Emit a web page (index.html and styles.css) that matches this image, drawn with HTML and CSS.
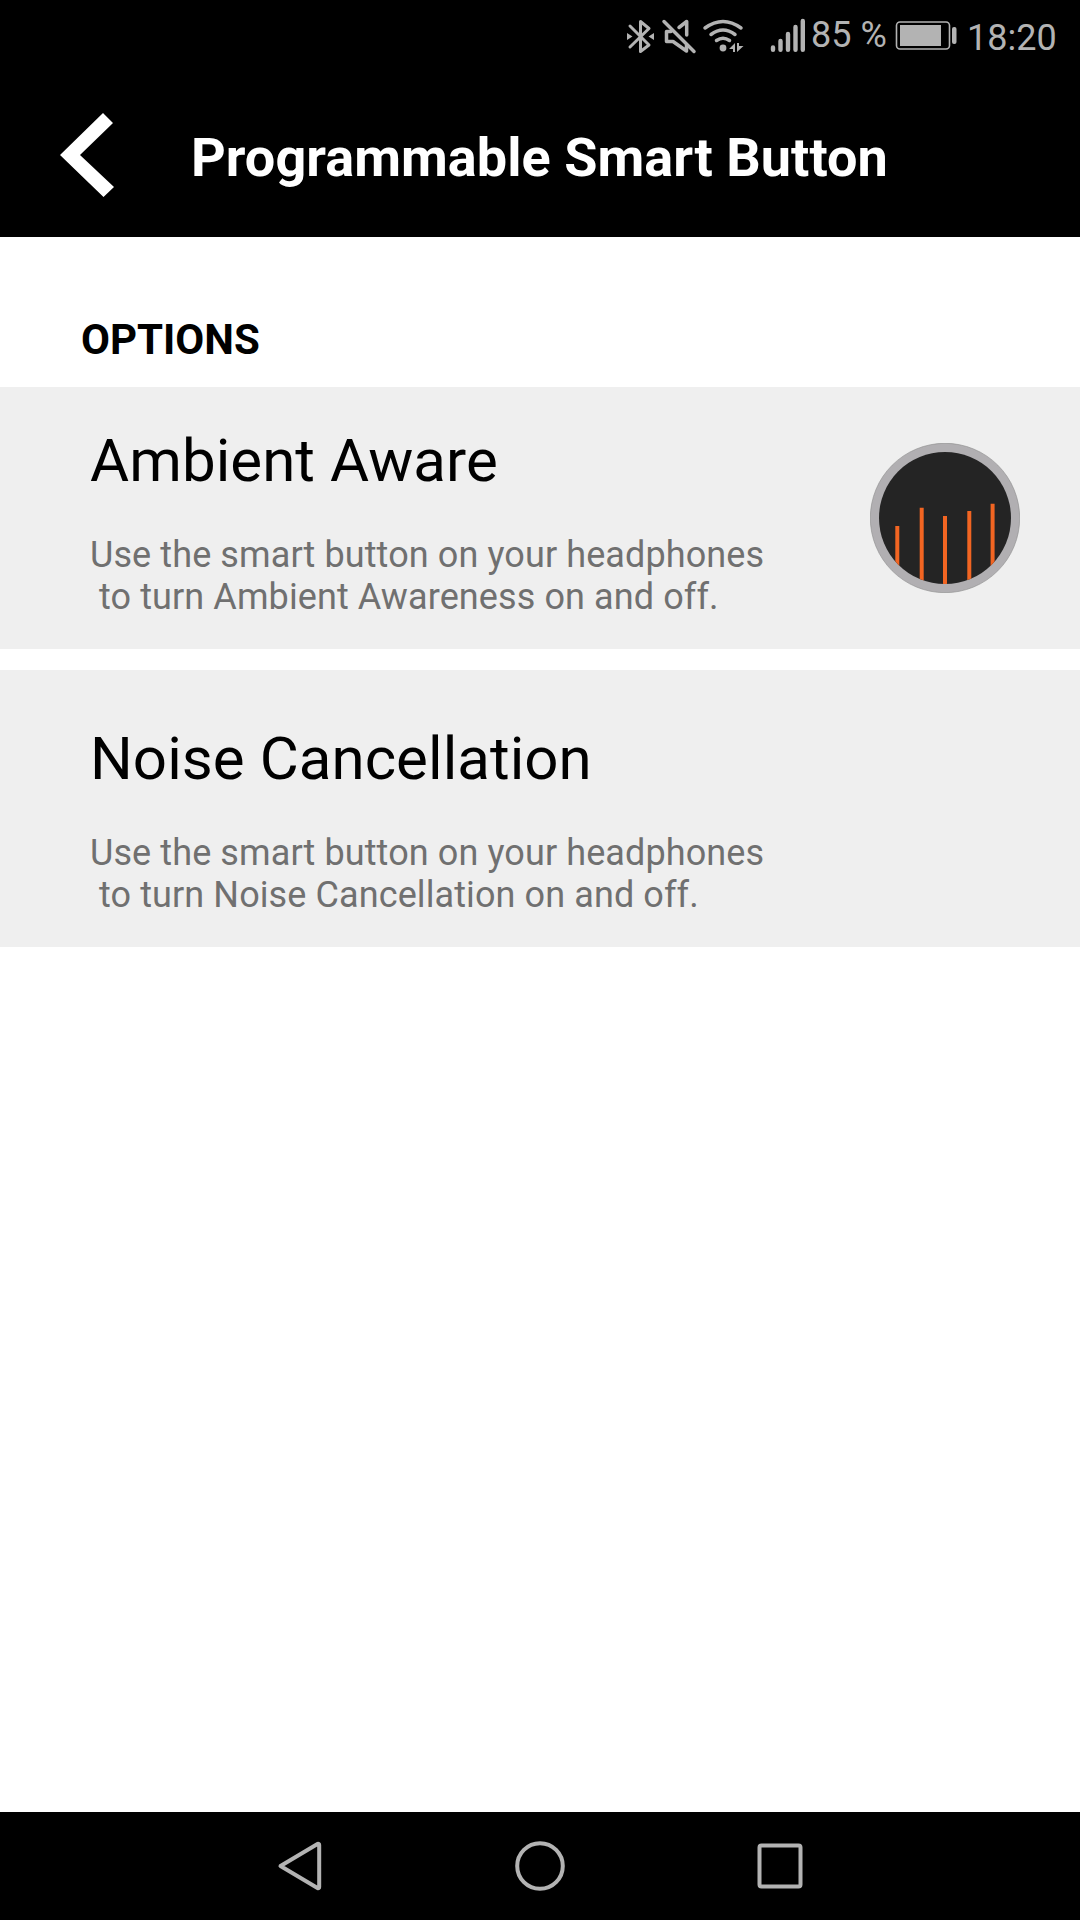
FILE: index.html
```html
<!DOCTYPE html>
<html lang="en">

<head>
    <meta charset="UTF-8">
    <meta name="viewport" content="width=device-width, initial-scale=1.0">
    <title>Programmable Smart Button</title>
    <link rel="stylesheet" href="styles.css">
</head>

<body>
    <div class="screen">
        <div class="status-bar">
            <!-- Bluetooth -->
            <svg class="status-icon" width="34" height="72" viewBox="624 0 34 72">
                <path class="line" d="M630 26L649 45L640.5 51.5V21.5L649 28.5L630 47" />
                <path class="solid" d="M627 33L632.5 36.5L627 40ZM654 33L648.5 36.5L654 40Z" />
            </svg>
            <!-- Muted speaker -->
            <svg class="status-icon" width="42" height="72" viewBox="658 0 42 72">
                <path class="line mute" d="M671 31.5H666.5V41.5H673L686.5 51V45M679 27.5L686.7 21.5V35" />
                <path class="line mute" d="M664 21.5L694 51.5" />
            </svg>
            <!-- Wi-Fi -->
            <svg class="status-icon" width="60" height="72" viewBox="700 0 60 72">
                <path class="line wifi" d="M705 28Q723 15 741 28M711 34.5Q723 25.5 735 34.5M716.5 40.5Q723 36 729.5 40.5" />
                <circle class="solid" cx="723" cy="48" r="3.4" />
                <path class="solid" d="M729 49L735 43V52H733V49ZM737 43H739V46H743.5L737 52Z" />
            </svg>
            <!-- Signal -->
            <svg class="status-icon" width="50" height="72" viewBox="760 0 50 72">
                <path class="line signal" d="M773 47.5V49.8M780.5 41V49.8M788 34V49.8M795.5 27V49.8M802.8 21V49.8" />
            </svg>
            <span class="battery-level">85 %</span>
            <!-- Battery -->
            <svg class="status-icon battery" width="64" height="72" viewBox="895 0 64 72">
                <rect class="outline" x="896.5" y="22" width="53" height="27" rx="3.5" />
                <rect class="solid" x="900" y="25" width="41" height="21" />
                <rect class="solid" x="952" y="27" width="4.5" height="17" rx="2" />
            </svg>
            <span class="clock">18:20</span>
        </div>

        <header class="header">
            <svg class="back" width="54" height="84" viewBox="60 113 54 84">
                <path d="M103 113L113 123L80 155L114 187L103.5 197L60 155Z" />
            </svg>
            <h1>Programmable Smart Button</h1>
        </header>

        <main>
            <h2>OPTIONS</h2>
            <div class="option">
                <div class="option-text">
                    <h3>Ambient Aware</h3>
                    <p>Use the smart button on your headphones
 to turn Ambient Awareness on and off.</p>
                </div>
                <svg class="badge" width="150" height="150" viewBox="0 0 150 150">
                    <circle class="badge-ring" cx="75" cy="75" r="74.7" />
                    <circle class="badge-face" cx="75" cy="75" r="66" />
                    <clipPath id="face">
                        <circle cx="75" cy="75" r="66" />
                    </clipPath>
                    <path class="badge-bars" clip-path="url(#face)" d="M27.3 83V150M51.7 64.7V150M75 73V150M99.3 68V150M122.6 60.7V150" />
                </svg>
            </div>
            <div class="option option-tall">
                <div class="option-text">
                    <h3>Noise Cancellation</h3>
                    <p>Use the smart button on your headphones
 to turn Noise Cancellation on and off.</p>
                </div>
            </div>
        </main>

        <nav class="nav-bar">
            <svg width="240" height="108" viewBox="180 1812 240 108">
                <path d="M280.5 1866L317.5 1844Q319.2 1843.5 319.2 1845V1887Q319.2 1888.5 317.5 1888L280.5 1866Z" />
            </svg>
            <svg width="240" height="108" viewBox="420 1812 240 108">
                <circle cx="540" cy="1866" r="22.8" />
            </svg>
            <svg width="240" height="108" viewBox="660 1812 240 108">
                <rect x="759.5" y="1845.5" width="41" height="41" rx="2" />
            </svg>
        </nav>
    </div>
</body>

</html>
```
FILE: styles.css
```css
/* Global Styles */
body {
    font-family: Roboto, 'Liberation Sans', sans-serif;
    background-color: #fff;
    color: #000;
    margin: 0;
}

.screen {
    display: flex;
    flex-direction: column;
    width: 1080px;
    height: 1920px;
}

h1,
h2,
h3,
p {
    margin: 0;
}

/* Status Bar */
.status-bar {
    display: flex;
    height: 72px;
    padding-left: 624px;
    background-color: #000;
    color: #b3b3b3;
    font-size: 36px;
    white-space: nowrap;
}

.status-icon {
    flex: none;
}

.line,
.outline {
    fill: none;
    stroke: #b3b3b3;
    stroke-width: 3;
    stroke-linecap: round;
    stroke-linejoin: round;
}

.outline {
    stroke-width: 1.6;
}

.wifi,
.mute {
    stroke-width: 3.5;
}

.signal {
    stroke-width: 4.4;
}

.solid {
    fill: #b3b3b3;
}

.battery-level {
    width: 84px;
    margin-left: 1px;
    line-height: 71px;
}

.clock {
    margin-left: 8px;
    line-height: 76px;
}

/* Header */
.header {
    display: flex;
    align-items: flex-start;
    height: 165px;
    background-color: #000;
    color: #fff;
}

.back {
    margin: 41px 77px 0 60px;
    fill: #fff;
}

h1 {
    margin-top: 54px;
    font-size: 54px;
    line-height: 64px;
    letter-spacing: 0.05px;
}

/* Options */
main {
    flex: 1;
}

h2 {
    padding: 78px 81px 22px;
    font-size: 42px;
    line-height: 50px;
}

.option {
    display: flex;
    justify-content: space-between;
    align-items: center;
    padding: 39px 60px 31px 90px;
    margin-bottom: 21px;
    background-color: #efefef;
}

.option-tall {
    padding-top: 54px;
}

h3 {
    font-size: 60px;
    font-weight: 400;
    line-height: 70px;
    letter-spacing: 0.06px;
}

.option p {
    margin-top: 38px;
    color: #707070;
    font-size: 36px;
    line-height: 42px;
    letter-spacing: 0.1px;
    white-space: pre;
}

.badge {
    margin: -5px 0 3px;
}

.badge-ring {
    fill: #b1afb2;
    stroke: #8c8c8c;
    stroke-width: 0.6;
}

.badge-face {
    fill: #242424;
}

.badge-bars {
    stroke: #f26522;
    stroke-width: 4;
}

/* Navigation Bar */
.nav-bar {
    display: flex;
    justify-content: center;
    height: 108px;
    background-color: #000;
    fill: none;
    stroke: #b3b3b3;
    stroke-width: 4;
    stroke-linejoin: round;
}
```
